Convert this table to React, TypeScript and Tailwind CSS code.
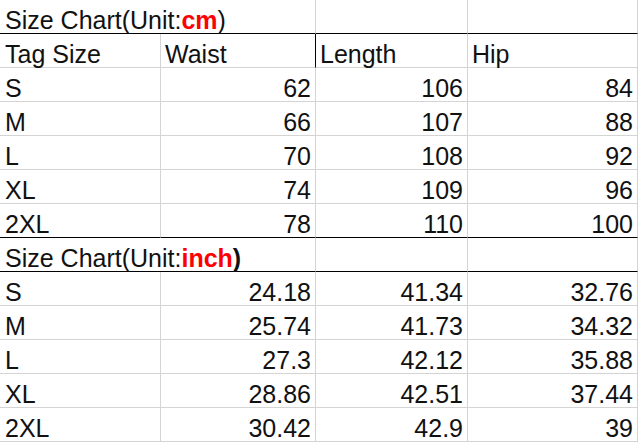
import React from 'react'

type Row = [string, string, string, string]

const cmRows: Row[] = [
    ['S', '62', '106', '84'],
    ['M', '66', '107', '88'],
    ['L', '70', '108', '92'],
    ['XL', '74', '109', '96'],
    ['2XL', '78', '110', '100'],
]

const inchRows: Row[] = [
    ['S', '24.18', '41.34', '32.76'],
    ['M', '25.74', '41.73', '34.32'],
    ['L', '27.3', '42.12', '35.88'],
    ['XL', '28.86', '42.51', '37.44'],
    ['2XL', '30.42', '42.9', '39'],
]

const cell = 'h-[34px] flex items-end pb-[1px] border-b border-r border-[#d4d4d4] whitespace-nowrap'

const Title = ({ unit, last }: { unit: string; last?: boolean }) => (
    <>
        <div className={`${cell} col-span-2 pl-[5px] border-b-black`}>
            <span>Size Chart(Unit:</span>
            <span className='font-bold text-[#ff0000]'>{unit}</span>
            <span className={last ? 'font-bold' : ''}>)</span>
        </div>
        <div className={`${cell} border-b-black`}></div>
        <div className={`${cell} border-b-black`}></div>
    </>
)

const DataRow = ({ row, black }: { row: Row; black?: boolean }) => (
    <>
        <div className={`${cell} pl-[5px] ${black ? 'border-b-black' : ''}`}>{row[0]}</div>
        {row.slice(1).map((v, i) => (
            <div key={i} className={`${cell} justify-end pr-[4px] ${black ? 'border-b-black' : ''}`}>{v}</div>
        ))}
    </>
)

export default function App() {
    return (
        <div className="w-[638px] h-[444px] bg-white overflow-hidden text-[#111] text-[25px] leading-[24px] font-['Liberation_Sans',Arial,sans-serif]">
            <div className="grid grid-cols-[161px_155px_152px_170px]">
                <Title unit='cm' />

                {/* header row */}
                <div className={`${cell} pl-[5px]`}>Tag Size</div>
                <div className={`${cell} pl-[4px] border-r-black`}>Waist</div>
                <div className={`${cell} pl-[4px]`}>Length</div>
                <div className={`${cell} pl-[4px]`}>Hip</div>

                {cmRows.map((r, i) => (
                    <DataRow key={'cm' + i} row={r} black={i === cmRows.length - 1} />
                ))}

                <Title unit='inch' last />

                {inchRows.map((r, i) => (
                    <DataRow key={'in' + i} row={r} />
                ))}
            </div>
        </div>
    )
}
